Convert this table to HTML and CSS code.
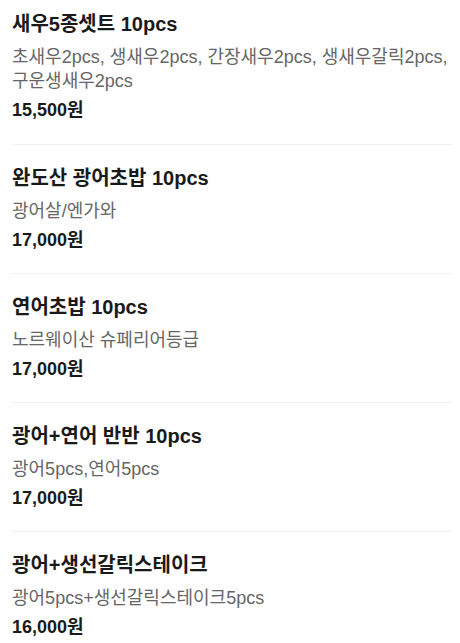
FILE: index.html
```html
<!DOCTYPE html>
<html lang="ko">
<head>
<meta charset="utf-8">
<link rel="stylesheet" href="styles.css">
</head>
<body>
<ul class="menu">
  <li class="item">
    <h3 class="name">새우5종셋트 10pcs</h3>
    <p class="desc">초새우2pcs, 생새우2pcs, 간장새우2pcs, 생새우갈릭2pcs, 구운생새우2pcs</p>
    <p class="price">15,500원</p>
  </li>
  <li class="item">
    <h3 class="name">완도산 광어초밥 10pcs</h3>
    <p class="desc">광어살/엔가와</p>
    <p class="price">17,000원</p>
  </li>
  <li class="item">
    <h3 class="name">연어초밥 10pcs</h3>
    <p class="desc">노르웨이산 슈페리어등급</p>
    <p class="price">17,000원</p>
  </li>
  <li class="item">
    <h3 class="name">광어+연어 반반 10pcs</h3>
    <p class="desc">광어5pcs,연어5pcs</p>
    <p class="price">17,000원</p>
  </li>
  <li class="item">
    <h3 class="name">광어+생선갈릭스테이크</h3>
    <p class="desc">광어5pcs+생선갈릭스테이크5pcs</p>
    <p class="price">16,000원</p>
  </li>
</ul>
</body>
</html>
```
FILE: styles.css
```css
html, body {
  margin: 0;
  padding: 0;
  background: #fff;
}
body {
  font-family: "Liberation Sans", "Noto Sans CJK KR", sans-serif;
  color: #222;
}
.menu {
  list-style: none;
  margin: 0;
  padding: 0 8px 0 11px;
}
.item {
  padding: 20px 0 21px 1px;
  border-top: 1px solid #f1f1f1;
}
.item:first-child {
  border-top: none;
  padding-top: 11px;
  padding-bottom: 22px;
}
.name {
  margin: 0;
  font-size: 20px;
  line-height: 26px;
  font-weight: bold;
  color: #1a1a1a;
}
.desc {
  margin: 8px 0 0;
  font-size: 18px;
  line-height: 24px;
  color: #666;
}
.price {
  margin: 5px 0 0;
  font-size: 18px;
  line-height: 24px;
  font-weight: bold;
  color: #1a1a1a;
}
```
